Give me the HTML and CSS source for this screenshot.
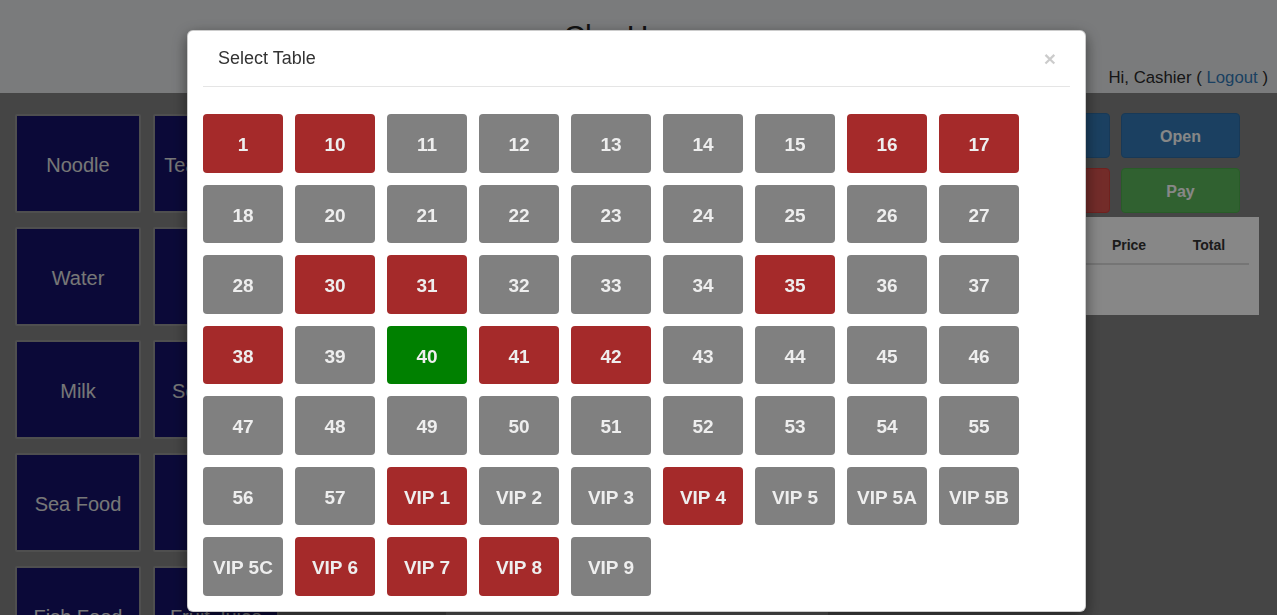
FILE: index.html
```html
<!DOCTYPE html>
<html lang="en">
<head>
    <meta charset="UTF-8" />
    <title>Cha House - POS</title>
    <link rel="stylesheet" href="styles.css">
</head>
<body class="modal-open">
    <div class="topbar">
        <h1 class="brand">Cha House</h1>
        <div class="user">Hi, Cashier ( <a href="#">Logout</a> )</div>
    </div>

    <div class="main">
        <div class="categories">
            <button class="cat">Noodle</button>
            <button class="cat">Tea &amp; Drink</button>
            <button class="cat">Water</button>
            <button class="cat">Beer</button>
            <button class="cat">Milk</button>
            <button class="cat">Soft Drink</button>
            <button class="cat">Sea Food</button>
            <button class="cat">Rice</button>
            <button class="cat">Fish Food</button>
            <button class="cat">Fruit Juice</button>
        </div>

        <div class="items"></div>
        <div class="display"></div>

        <div class="order">
            <div class="actions">
                <button class="act act-blue">Table</button>
                <button class="act act-blue">Print</button>
                <button class="act act-blue">Open</button>
                <button class="act act-red">Clear</button>
                <button class="act act-red">Cancel</button>
                <button class="act act-green">Pay</button>
            </div>
            <div class="bill">
                <table>
                    <thead>
                        <tr>
                            <th class="col-item">Item</th>
                            <th>Qty</th>
                            <th>Price</th>
                            <th>Total</th>
                        </tr>
                    </thead>
                    <tbody></tbody>
                </table>
            </div>
        </div>
    </div>

    <div class="backdrop"></div>

    <div class="modal">
        <div class="modal-dialog">
            <div class="modal-content">
                <div class="modal-header">
                    <h4 class="modal-title">Select Table</h4>
                    <button class="close">&times;</button>
                </div>
                <div class="modal-body">
                    <button class="tbl busy">1</button>
                    <button class="tbl busy">10</button>
                    <button class="tbl">11</button>
                    <button class="tbl">12</button>
                    <button class="tbl">13</button>
                    <button class="tbl">14</button>
                    <button class="tbl">15</button>
                    <button class="tbl busy">16</button>
                    <button class="tbl busy">17</button>

                    <button class="tbl">18</button>
                    <button class="tbl">20</button>
                    <button class="tbl">21</button>
                    <button class="tbl">22</button>
                    <button class="tbl">23</button>
                    <button class="tbl">24</button>
                    <button class="tbl">25</button>
                    <button class="tbl">26</button>
                    <button class="tbl">27</button>

                    <button class="tbl">28</button>
                    <button class="tbl busy">30</button>
                    <button class="tbl busy">31</button>
                    <button class="tbl">32</button>
                    <button class="tbl">33</button>
                    <button class="tbl">34</button>
                    <button class="tbl busy">35</button>
                    <button class="tbl">36</button>
                    <button class="tbl">37</button>

                    <button class="tbl busy">38</button>
                    <button class="tbl">39</button>
                    <button class="tbl current">40</button>
                    <button class="tbl busy">41</button>
                    <button class="tbl busy">42</button>
                    <button class="tbl">43</button>
                    <button class="tbl">44</button>
                    <button class="tbl">45</button>
                    <button class="tbl">46</button>

                    <button class="tbl">47</button>
                    <button class="tbl">48</button>
                    <button class="tbl">49</button>
                    <button class="tbl">50</button>
                    <button class="tbl">51</button>
                    <button class="tbl">52</button>
                    <button class="tbl">53</button>
                    <button class="tbl">54</button>
                    <button class="tbl">55</button>

                    <button class="tbl">56</button>
                    <button class="tbl">57</button>
                    <button class="tbl busy">VIP 1</button>
                    <button class="tbl">VIP 2</button>
                    <button class="tbl">VIP 3</button>
                    <button class="tbl busy">VIP 4</button>
                    <button class="tbl">VIP 5</button>
                    <button class="tbl">VIP 5A</button>
                    <button class="tbl">VIP 5B</button>

                    <button class="tbl">VIP 5C</button>
                    <button class="tbl busy">VIP 6</button>
                    <button class="tbl busy">VIP 7</button>
                    <button class="tbl busy">VIP 8</button>
                    <button class="tbl">VIP 9</button>
                </div>
            </div>
        </div>
    </div>
</body>
</html>
```

FILE: styles.css
```css
body {
    font-family: 'Liberation Sans', Arial, Helvetica, sans-serif;
    background-color: #838383;
    color: #333;
    margin: 0;
    font-size: 14px;
}

.modal-open {
    overflow: hidden;
    height: 615px;
}

button {
    font-family: inherit;
    cursor: pointer;
}

/* Barra superior */
.topbar {
    height: 93px;
    background-color: #e7e9eb;
    position: relative;
}

.brand {
    margin: 0;
    padding-top: 18px;
    text-align: center;
    font-size: 30px;
    font-weight: normal;
    line-height: 36px;
    color: #222;
}

.user {
    position: absolute;
    right: 9px;
    top: 68px;
    font-size: 16.8px;
    color: #2a2a2a;
}

.user a {
    color: #337ab7;
    text-decoration: none;
}

/* Zona principal */
.main {
    display: flex;
    height: 522px;
    overflow: hidden;
    padding: 20px 18px 0 15px;
    box-sizing: border-box;
}

.categories {
    display: grid;
    grid-template-columns: 126px 126px;
    grid-auto-rows: 99px;
    gap: 14px 12px;
    width: 264px;
    padding-top: 1px;
}

.cat {
    background-color: #15126b;
    color: #e0e0e0;
    border: 2px solid #959595;
    border-radius: 2px;
    font-size: 20px;
    white-space: nowrap;
    padding: 4px 0 0;
}

.items {
    width: 167px;
}

.display {
    width: 382px;
    height: 560px;
    margin-top: 60px;
    background-color: #a6a6a6;
}

.order {
    margin-left: 20px;
    width: 411px;
}

.actions {
    display: grid;
    grid-template-columns: repeat(3, 119px);
    grid-auto-rows: 45px;
    gap: 10px 11px;
    justify-content: end;
    padding-right: 19px;
}

.act {
    border: 1px solid transparent;
    border-radius: 4px;
    color: #fff;
    font-size: 16px;
    font-weight: bold;
    padding: 2px 0 0;
}

.act-blue {
    background-color: #337ab7;
    border-color: #2e6da4;
}

.act-red {
    background-color: #d9534f;
    border-color: #d43f3a;
}

.act-green {
    background-color: #5cb85c;
    border-color: #4cae4c;
}

.bill {
    margin-top: 4px;
    height: 98px;
    background-color: #fff;
    padding: 10px;
    box-sizing: border-box;
}

.bill table {
    width: 100%;
    border-collapse: collapse;
}

.bill th {
    width: 80px;
    padding: 8px 0;
    line-height: 20px;
    font-size: 14px;
    text-align: center;
    border-bottom: 2px solid #ddd;
}

.bill th.col-item {
    width: auto;
    text-align: left;
}

/* Modal de mesas */
.backdrop {
    position: fixed;
    top: 0;
    right: 0;
    bottom: 0;
    left: 0;
    background-color: rgba(0, 0, 0, 0.47);
}

.modal {
    position: fixed;
    top: 0;
    right: 0;
    bottom: 0;
    left: 0;
}

.modal-dialog {
    width: 899px;
    margin: 30px 0 0 187px;
}

.modal-content {
    background-color: #fff;
    border: 1px solid rgba(0, 0, 0, 0.2);
    border-radius: 6px;
    box-shadow: 0 5px 15px rgba(0, 0, 0, 0.5);
    padding: 0 15px;
}

.modal-header {
    display: flex;
    justify-content: space-between;
    align-items: center;
    padding: 15px;
    border-bottom: 1px solid #e5e5e5;
}

.modal-title {
    margin: 0;
    font-size: 18px;
    font-weight: normal;
    line-height: 25px;
    color: #333;
}

.close {
    background: none;
    border: none;
    padding: 0;
    margin-right: -1px;
    font-size: 21px;
    font-weight: bold;
    line-height: 1;
    color: #000;
    opacity: 0.2;
}

.modal-body {
    display: flex;
    flex-wrap: wrap;
    gap: 12px 12px;
    padding: 27px 0 15px;
}

.tbl {
    width: 80px;
    height: 58.5px;
    border: none;
    border-radius: 4px;
    background-color: gray;
    color: #eee;
    font-size: 19px;
    font-weight: bold;
    padding: 4px 0 0;
}

.tbl.busy {
    background-color: brown;
}

.tbl.current {
    background-color: green;
}
```
